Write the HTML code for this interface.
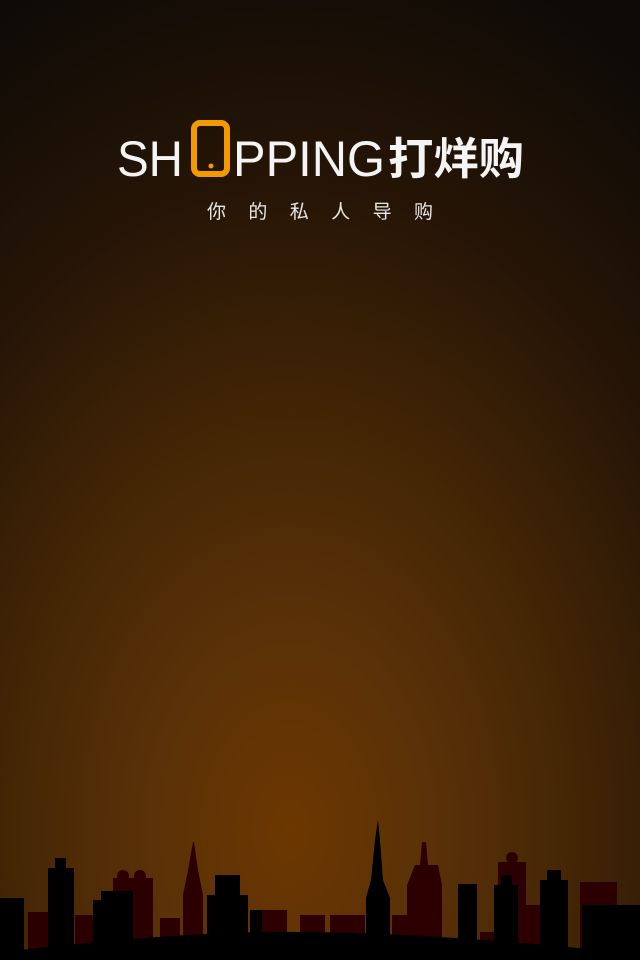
<!DOCTYPE html>
<html><head><meta charset="utf-8"><style>
html,body{margin:0;padding:0;}
body{width:640px;height:960px;overflow:hidden;position:relative;
background:radial-gradient(ellipse 640px 920px at 290px 830px,#6c3700 0%,#5a3108 22%,#432505 45%,#261506 70%,#0e0a06 100%);}
svg{position:absolute;left:0;top:0}
</style></head><body>
<svg width="640" height="960" viewBox="0 0 640 960">
<text x="117" y="176" font-family="Liberation Sans, sans-serif" font-size="50" fill="#f4f4f4" textLength="66" lengthAdjust="spacingAndGlyphs">SH</text>
<rect x="194" y="123" width="33" height="51" rx="6" fill="none" stroke="#f39a00" stroke-width="6"/>
<circle cx="211" cy="166" r="2.5" fill="#f39a00"/>
<text x="233" y="176" font-family="Liberation Sans, sans-serif" font-size="50" fill="#f4f4f4" textLength="152" lengthAdjust="spacingAndGlyphs">PPING</text>
<text x="388" y="174" font-family="Noto Sans CJK SC, sans-serif" font-weight="bold" font-size="44" fill="#f4f4f4" textLength="136" lengthAdjust="spacingAndGlyphs">打烊购</text>
<text x="207" y="218" font-family="Noto Sans CJK SC, sans-serif" font-size="19" fill="#e8e8e8" textLength="226" lengthAdjust="spacing">你的私人导购</text>
<g fill="#2c0000">
<rect x="28" y="912" width="22" height="48"/>
<rect x="113" y="878" width="40" height="82"/><circle cx="123" cy="876" r="6"/><circle cx="140" cy="876" r="6"/>
<rect x="75" y="915" width="20" height="45"/>
<polygon points="183,960 183,895 188,870 193,842 194,842 198,870 203,895 203,960"/>
<rect x="160" y="918" width="20" height="42"/>
<rect x="262" y="910" width="25" height="50"/>
<rect x="300" y="915" width="25" height="45"/>
<rect x="330" y="915" width="35" height="45"/>
<polygon points="407,960 407,885 415,865 420,865 422,842 426,842 428,865 438,865 442,885 442,960"/>
<rect x="392" y="915" width="20" height="45"/>
<rect x="498" y="862" width="28" height="98"/><circle cx="512" cy="858" r="6"/>
<rect x="520" y="905" width="20" height="55"/>
<rect x="580" y="882" width="37" height="78"/>
<rect x="480" y="932" width="15" height="28"/>
</g>
<g fill="#000">
<rect x="0" y="898" width="24" height="62"/>
<rect x="48" y="868" width="26" height="92"/><rect x="55" y="858" width="11" height="12"/>
<rect x="93" y="900" width="40" height="60"/><rect x="101" y="891" width="32" height="12"/>
<rect x="207" y="895" width="41" height="65"/><rect x="215" y="875" width="25" height="22"/>
<rect x="250" y="910" width="12" height="50"/>
<polygon points="366,960 366,898 371,880 375,840 378,820 380,840 383,880 390,898 390,960"/>
<rect x="458" y="884" width="19" height="76"/>
<rect x="494" y="885" width="24" height="75"/><rect x="501" y="875" width="11" height="12"/>
<rect x="540" y="880" width="28" height="80"/><rect x="547" y="870" width="14" height="12"/>
<rect x="582" y="905" width="58" height="55"/>
<path d="M20 950 Q200 930 300 932 Q420 932 620 952 L620 960 L20 960Z"/>
<rect x="0" y="950" width="640" height="10"/>
</g>
</svg>
</body></html>
